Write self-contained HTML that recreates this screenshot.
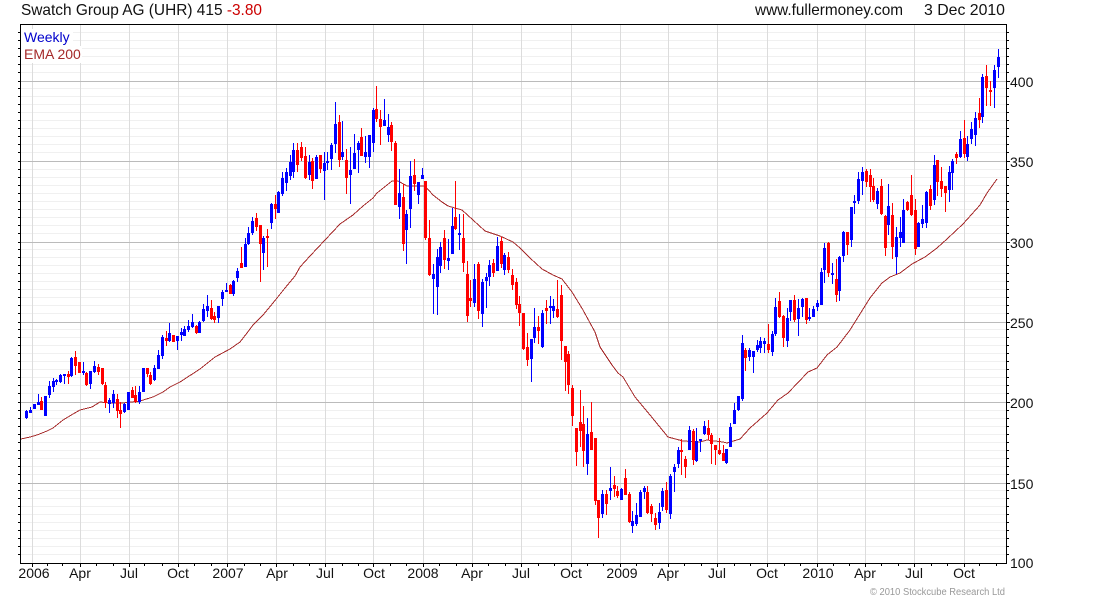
<!DOCTYPE html>
<html><head><meta charset="utf-8"><title>Swatch Group AG (UHR)</title>
<style>html,body{margin:0;padding:0;background:#fff}svg{display:block}text{font-family:"Liberation Sans",Arial,sans-serif;font-size:14px;fill:#111}</style></head>
<body>
<svg width="1100" height="600" viewBox="0 0 1100 600" xmlns="http://www.w3.org/2000/svg">
<rect width="1100" height="600" fill="#fff"/>
<g shape-rendering="crispEdges" fill="none">
<path stroke="#f0f0f0" d="M21 32.5H1006M21 40.5H1006M21 48.5H1006M21 56.5H1006M21 64.5H1006M21 72.5H1006M21 88.5H1006M21 96.5H1006M21 104.5H1006M21 112.5H1006M21 120.5H1006M21 128.5H1006M21 136.5H1006M21 144.5H1006M21 152.5H1006M21 169.5H1006M21 177.5H1006M21 185.5H1006M21 193.5H1006M21 201.5H1006M21 209.5H1006M21 217.5H1006M21 225.5H1006M21 233.5H1006M21 249.5H1006M21 257.5H1006M21 265.5H1006M21 273.5H1006M21 281.5H1006M21 289.5H1006M21 297.5H1006M21 305.5H1006M21 313.5H1006M21 329.5H1006M21 337.5H1006M21 345.5H1006M21 353.5H1006M21 361.5H1006M21 369.5H1006M21 377.5H1006M21 385.5H1006M21 393.5H1006M21 410.5H1006M21 418.5H1006M21 426.5H1006M21 434.5H1006M21 442.5H1006M21 450.5H1006M21 458.5H1006M21 466.5H1006M21 474.5H1006M21 490.5H1006M21 498.5H1006M21 506.5H1006M21 514.5H1006M21 522.5H1006M21 530.5H1006M21 538.5H1006M21 546.5H1006M21 554.5H1006"/>
<path stroke="#dcdcdc" d="M32.5 25V563M80.5 25V563M129.5 25V563M178.5 25V563M227.5 25V563M276.5 25V563M325.5 25V563M373.5 25V563M423.5 25V563M472.5 25V563M521.5 25V563M571.5 25V563M620.5 25V563M668.5 25V563M717.5 25V563M767.5 25V563M817.5 25V563M865.5 25V563M914.5 25V563M964.5 25V563"/>
<path stroke="#bbbbbb" d="M21 81.5H1006M21 161.5H1006M21 242.5H1006M21 322.5H1006M21 402.5H1006M21 483.5H1006"/>
</g>
<path fill="none" stroke="#a52a2a" stroke-width="1" shape-rendering="crispEdges" d="M21 439L30 437L37 435L47 431L53 428L63 420L73 414L80 410L92 407L100 402L110 403L123 403L140 401L153 397L163 392L170 387L180 382L200 369L215 357L230 349L240 342L247 333L253 325L263 315L273 303L285 288L295 276L300 267L310 256L325 240L340 224L353 215L363 206L373 198L377 193L387 185L392 181L398 181L407 186L425 186L433 195L442 202L448 206L462 210L473 220L485 231L500 236L513 242L520 248L530 258L542 269L553 275L562 279L572 292L583 310L595 332L600 347L612 365L618 373L623 377L635 397L650 415L668 437L683 441L700 442L707 440L723 442L727 443L740 439L750 428L767 413L778 400L788 393L808 372L817 368L827 355L837 347L850 330L870 298L882 283L890 277L900 273L912 264L925 257L937 248L947 239L963 224L980 205L987 193L997 179"/>
<g shape-rendering="crispEdges" fill="none">
<path stroke="#0000ff" d="M26.5 410V419M30.5 407V413M34.5 404V409M38.5 394V405M45.5 396V416M49.5 381V398M53.5 378V392M56.5 379V385M60.5 374V383M64.5 374V384M71.5 357V377M83.5 362V375M90.5 371V389M94.5 361V373M109.5 398V413M113.5 390V408M124.5 403V413M128.5 392V410M139.5 386V404M143.5 368V392M154.5 365V381M158.5 350V369M162.5 335V359M169.5 323V342M177.5 336V350M181.5 328V341M184.5 326V336M188.5 320V332M192.5 314V328M199.5 321V333M203.5 304V322M207.5 295V317M218.5 306V323M222.5 290V306M226.5 283V292M233.5 280V296M237.5 268V282M245.5 238V267M248.5 227V245M252.5 217V235M263.5 236V270M271.5 203V229M278.5 191V213M282.5 172V196M286.5 168V191M290.5 155V180M293.5 143V178M309.5 155V180M316.5 155V179M324.5 152V200M327.5 152V170M331.5 143V170M335.5 102V153M342.5 121V160M350.5 147V204M354.5 134V169M358.5 141V173M365.5 136V163M369.5 135V168M373.5 108V152M384.5 99V126M388.5 114V142M399.5 169V219M406.5 210V264M410.5 161V228M418.5 182V204M422.5 168V179M433.5 264V314M437.5 249V315M440.5 242V273M448.5 239V270M452.5 208V254M459.5 214V250M474.5 264V307M482.5 279V327M486.5 273V308M489.5 260V286M497.5 237V271M504.5 253V275M531.5 339V382M534.5 308V343M542.5 310V348M550.5 296V324M553.5 299V318M587.5 418V475M602.5 490V518M610.5 467V500M621.5 488V500M632.5 511V533M636.5 503V526M640.5 490V517M644.5 486V499M659.5 503V529M662.5 488V511M670.5 474V519M674.5 464V492M678.5 447V468M689.5 426V450M696.5 428V462M700.5 439V452M704.5 421V435M726.5 449V464M730.5 423V447M734.5 403V424M738.5 396V411M742.5 335V401M749.5 348V361M753.5 351V373M757.5 340V352M760.5 337V353M764.5 338V353M772.5 331V356M775.5 298V336M787.5 308V347M790.5 300V321M798.5 299V336M802.5 298V317M809.5 308V321M813.5 306V317M817.5 300V311M821.5 268V305M824.5 243V283M832.5 263V284M839.5 256V301M843.5 231V262M851.5 207V247M854.5 195V214M858.5 172V204M862.5 167V195M877.5 188V209M888.5 184V235M896.5 227V274M900.5 217V247M903.5 199V243M918.5 222V247M922.5 205V228M926.5 191V228M934.5 155V205M949.5 166V202M952.5 159V190M960.5 131V158M967.5 136V161M971.5 122V144M975.5 112V146M982.5 74V123M994.5 65V108M998.5 49V78"/>
<path stroke="#0000ff" stroke-width="3" d="M26.5 411V418M30.5 410V413M34.5 404V409M38.5 402V405M45.5 396V416M49.5 386V395M53.5 381V387M56.5 380V382M60.5 375V382M64.5 374V376M71.5 358V376M83.5 371V373M90.5 371V384M94.5 366V372M109.5 400V404M113.5 394V403M124.5 404V412M128.5 392V410M139.5 392V402M143.5 368V392M154.5 368V380M158.5 355V369M162.5 337V356M169.5 333V341M177.5 336V341M181.5 332V335M184.5 329V336M188.5 326V330M192.5 322V327M199.5 322V333M203.5 309V321M207.5 306V311M218.5 306V318M222.5 292V299M226.5 290V292M233.5 281V294M237.5 271V278M245.5 244V267M248.5 233V244M252.5 221V233M263.5 238V253M271.5 204V223M278.5 192V213M282.5 178V194M286.5 172V183M290.5 162V176M293.5 150V172M309.5 162V175M316.5 157V179M324.5 163V171M327.5 161V163M331.5 145V159M335.5 124V144M342.5 152V157M350.5 170V175M354.5 153V169M358.5 143V150M365.5 152V157M369.5 135V157M373.5 110V143M384.5 120V126M388.5 127V135M399.5 193V207M406.5 214V230M410.5 176V209M418.5 182V195M422.5 175V179M433.5 274V279M437.5 257V287M440.5 247V266M448.5 258V261M452.5 226V254M459.5 233V235M474.5 279V303M482.5 282V314M486.5 277V281M489.5 265V277M497.5 246V271M504.5 255V270M531.5 339V359M534.5 327V338M542.5 313V347M550.5 306V308M553.5 306V311M587.5 434V464M602.5 494V514M610.5 488V491M621.5 489V500M632.5 521V526M636.5 515V524M640.5 492V517M644.5 488V492M659.5 512V523M662.5 491V507M670.5 476V514M674.5 467V472M678.5 450V464M689.5 430V450M696.5 441V461M700.5 439V441M704.5 426V434M726.5 449V463M730.5 427V447M734.5 410V424M738.5 396V410M742.5 343V399M749.5 350V357M753.5 351V357M757.5 345V350M760.5 341V348M764.5 341V344M772.5 334V352M775.5 307V334M787.5 318V341M790.5 300V312M798.5 308V319M802.5 299V307M809.5 317V319M813.5 309V317M817.5 303V307M821.5 272V305M824.5 248V270M832.5 273V275M839.5 257V291M843.5 232V256M851.5 207V240M854.5 201V203M858.5 179V201M862.5 172V181M877.5 191V204M888.5 206V225M896.5 237V257M900.5 232V238M903.5 210V243M918.5 223V247M922.5 219V224M926.5 192V223M934.5 165V200M949.5 172V190M952.5 161V173M960.5 139V157M967.5 144V157M971.5 129V139M975.5 118V135M982.5 77V117M994.5 70V88M998.5 57V67"/>
<path stroke="#ff0000" d="M41.5 397V410M68.5 371V384M75.5 351V375M79.5 362V373M86.5 372V386M98.5 364V375M102.5 368V385M105.5 382V408M117.5 394V418M120.5 402V428M132.5 387V398M135.5 386V403M147.5 368V377M150.5 372V385M166.5 331V346M173.5 335V342M196.5 325V334M211.5 300V320M214.5 312V323M230.5 284V294M241.5 247V268M256.5 213V231M260.5 225V282M267.5 229V267M275.5 195V219M297.5 143V172M301.5 142V161M305.5 147V179M312.5 158V189M320.5 155V173M339.5 115V167M346.5 149V194M361.5 128V156M376.5 86V122M380.5 110V145M391.5 122V151M395.5 141V205M403.5 184V251M414.5 159V191M425.5 181V240M429.5 220V276M444.5 230V269M455.5 181V230M463.5 214V272M467.5 261V322M470.5 280V307M478.5 262V319M493.5 259V277M501.5 237V268M508.5 252V273M512.5 269V290M516.5 278V309M519.5 296V326M523.5 313V350M527.5 333V366M538.5 316V344M546.5 300V324M557.5 280V318M561.5 285V360M565.5 346V391M568.5 351V394M572.5 385V426M576.5 428V466M580.5 390V447M583.5 406V467M591.5 402V450M595.5 438V505M598.5 500V538M606.5 490V515M614.5 476V497M617.5 486V498M625.5 469V495M629.5 492V523M647.5 486V514M651.5 504V522M655.5 513V530M666.5 482V513M681.5 439V475M685.5 456V478M693.5 429V465M708.5 420V440M711.5 433V464M715.5 445V465M719.5 438V455M723.5 445V461M745.5 348V371M768.5 324V353M779.5 292V318M783.5 315V347M794.5 295V322M806.5 298V324M828.5 242V277M836.5 259V302M847.5 232V255M866.5 169V187M870.5 169V202M873.5 178V202M881.5 179V215M885.5 215V256M892.5 203V259M907.5 201V211M911.5 175V216M915.5 199V255M930.5 185V210M937.5 160V196M941.5 167V197M945.5 186V212M956.5 152V164M964.5 120V158M979.5 98V128M986.5 65V106M990.5 81V106"/>
<path stroke="#ff0000" stroke-width="3" d="M41.5 401V410M68.5 374V377M75.5 357V366M79.5 362V373M86.5 373V385M98.5 367V372M102.5 368V384M105.5 385V403M117.5 399V411M120.5 410V414M132.5 390V398M135.5 395V402M147.5 368V374M150.5 375V384M166.5 338V341M173.5 335V342M196.5 326V333M211.5 308V319M214.5 316V320M230.5 285V294M241.5 263V268M256.5 218V227M260.5 225V244M267.5 236V238M275.5 204V209M297.5 150V165M301.5 147V158M305.5 156V178M312.5 161V181M320.5 155V169M339.5 122V160M346.5 160V178M361.5 137V156M376.5 109V119M380.5 119V127M391.5 125V142M395.5 143V205M403.5 197V244M414.5 175V184M425.5 181V238M429.5 238V275M444.5 238V260M455.5 217V229M463.5 238V263M467.5 274V316M470.5 298V301M478.5 264V311M493.5 263V273M501.5 241V264M508.5 257V270M512.5 275V285M516.5 282V305M519.5 304V313M523.5 313V349M527.5 347V360M538.5 327V331M546.5 308V311M557.5 309V317M561.5 295V341M565.5 346V362M568.5 354V385M572.5 388V416M576.5 428V452M580.5 422V431M583.5 424V451M591.5 432V450M595.5 438V501M598.5 500V518M606.5 494V504M614.5 485V489M617.5 491V496M625.5 478V495M629.5 494V522M647.5 492V513M651.5 506V514M655.5 518V525M666.5 490V510M681.5 450V452M685.5 459V467M693.5 431V460M708.5 428V435M711.5 435V444M715.5 445V450M719.5 450V454M723.5 453V461M745.5 350V358M768.5 344V350M779.5 301V317M783.5 316V338M794.5 300V320M806.5 298V320M828.5 243V273M836.5 279V295M847.5 232V245M866.5 171V182M870.5 175V187M873.5 186V200M881.5 186V214M885.5 216V248M892.5 215V247M907.5 202V210M911.5 195V215M915.5 210V249M930.5 189V206M937.5 160V182M941.5 181V189M945.5 186V193M956.5 154V158M964.5 138V154M979.5 113V120M986.5 76V88M990.5 90V92"/>
</g>
<g shape-rendering="crispEdges" fill="none" stroke="#000">
<path d="M20.5 24.5H1006.5V563.5H20.5Z"/>
<path d="M18 32.5h2M18 40.5h2M18 48.5h2M18 56.5h2M18 64.5h2M18 72.5h2M18 81.5h2M18 88.5h2M18 96.5h2M18 104.5h2M18 112.5h2M18 120.5h2M18 128.5h2M18 136.5h2M18 144.5h2M18 152.5h2M18 161.5h2M18 169.5h2M18 177.5h2M18 185.5h2M18 193.5h2M18 201.5h2M18 209.5h2M18 217.5h2M18 225.5h2M18 233.5h2M18 242.5h2M18 249.5h2M18 257.5h2M18 265.5h2M18 273.5h2M18 281.5h2M18 289.5h2M18 297.5h2M18 305.5h2M18 313.5h2M18 322.5h2M18 329.5h2M18 337.5h2M18 345.5h2M18 353.5h2M18 361.5h2M18 369.5h2M18 377.5h2M18 385.5h2M18 393.5h2M18 402.5h2M18 410.5h2M18 418.5h2M18 426.5h2M18 434.5h2M18 442.5h2M18 450.5h2M18 458.5h2M18 466.5h2M18 474.5h2M18 483.5h2M18 490.5h2M18 498.5h2M18 506.5h2M18 514.5h2M18 522.5h2M18 530.5h2M18 538.5h2M18 546.5h2M18 554.5h2"/>
<path d="M1007 32.5h2M1007 40.5h2M1007 48.5h2M1007 56.5h2M1007 64.5h2M1007 72.5h2M1007 81.5h3M1007 88.5h2M1007 96.5h2M1007 104.5h2M1007 112.5h2M1007 120.5h2M1007 128.5h2M1007 136.5h2M1007 144.5h2M1007 152.5h2M1007 161.5h3M1007 169.5h2M1007 177.5h2M1007 185.5h2M1007 193.5h2M1007 201.5h2M1007 209.5h2M1007 217.5h2M1007 225.5h2M1007 233.5h2M1007 242.5h3M1007 249.5h2M1007 257.5h2M1007 265.5h2M1007 273.5h2M1007 281.5h2M1007 289.5h2M1007 297.5h2M1007 305.5h2M1007 313.5h2M1007 322.5h3M1007 329.5h2M1007 337.5h2M1007 345.5h2M1007 353.5h2M1007 361.5h2M1007 369.5h2M1007 377.5h2M1007 385.5h2M1007 393.5h2M1007 402.5h3M1007 410.5h2M1007 418.5h2M1007 426.5h2M1007 434.5h2M1007 442.5h2M1007 450.5h2M1007 458.5h2M1007 466.5h2M1007 474.5h2M1007 483.5h3M1007 490.5h2M1007 498.5h2M1007 506.5h2M1007 514.5h2M1007 522.5h2M1007 530.5h2M1007 538.5h2M1007 546.5h2M1007 554.5h2"/>
<path d="M32.5 564v3M80.5 564v3M129.5 564v3M178.5 564v3M227.5 564v3M276.5 564v3M325.5 564v3M373.5 564v3M423.5 564v3M472.5 564v3M521.5 564v3M571.5 564v3M620.5 564v3M668.5 564v3M717.5 564v3M767.5 564v3M817.5 564v3M865.5 564v3M914.5 564v3M964.5 564v3"/>
<path d="M47.5 564v2M62.5 564v2M96.5 564v2M113.5 564v2M144.5 564v2M162.5 564v2M194.5 564v2M211.5 564v2M244.5 564v2M260.5 564v2M293.5 564v2M309.5 564v2M342.5 564v2M358.5 564v2M390.5 564v2M406.5 564v2M439.5 564v2M456.5 564v2M488.5 564v2M505.5 564v2M538.5 564v2M554.5 564v2M587.5 564v2M603.5 564v2M636.5 564v2M652.5 564v2M684.5 564v2M701.5 564v2M734.5 564v2M750.5 564v2M784.5 564v2M800.5 564v2M833.5 564v2M849.5 564v2M881.5 564v2M898.5 564v2M931.5 564v2M947.5 564v2M979.5 564v2M996.5 564v2"/>
</g>
<rect x="21" y="29" width="52" height="17" fill="#fff"/>
<rect x="21" y="46" width="61" height="17" fill="#fff"/>
<text x="24" y="42" style="fill:#0000cc">Weekly</text>
<text x="24" y="59" style="fill:#a52a2a">EMA 200</text>
<text x="21" y="15" textLength="241" lengthAdjust="spacingAndGlyphs" style="font-size:16px">Swatch Group AG (UHR) 415 <tspan style="fill:#cc0000">-3.80</tspan></text>
<text x="755" y="15" textLength="148" lengthAdjust="spacingAndGlyphs" style="font-size:16px">www.fullermoney.com</text>
<text x="924" y="15" textLength="81" lengthAdjust="spacingAndGlyphs" style="font-size:16px">3 Dec 2010</text>
<g>
<text x="1010" y="87">400</text><text x="1010" y="167">350</text><text x="1010" y="248">300</text><text x="1010" y="328">250</text><text x="1010" y="408">200</text><text x="1010" y="489">150</text><text x="1010" y="568">100</text>
</g>
<g text-anchor="middle">
<text x="34" y="578">2006</text><text x="80" y="578">Apr</text><text x="129" y="578">Jul</text><text x="178" y="578">Oct</text><text x="228" y="578">2007</text><text x="277" y="578">Apr</text><text x="325" y="578">Jul</text><text x="374" y="578">Oct</text><text x="423" y="578">2008</text><text x="472" y="578">Apr</text><text x="521" y="578">Jul</text><text x="571" y="578">Oct</text><text x="622" y="578">2009</text><text x="668" y="578">Apr</text><text x="717" y="578">Jul</text><text x="767" y="578">Oct</text><text x="818" y="578">2010</text><text x="865" y="578">Apr</text><text x="914" y="578">Jul</text><text x="964" y="578">Oct</text>
</g>
<text x="870" y="595" textLength="135" lengthAdjust="spacingAndGlyphs" style="font-size:10px;fill:#999">© 2010 Stockcube Research Ltd</text>
</svg>
</body></html>
